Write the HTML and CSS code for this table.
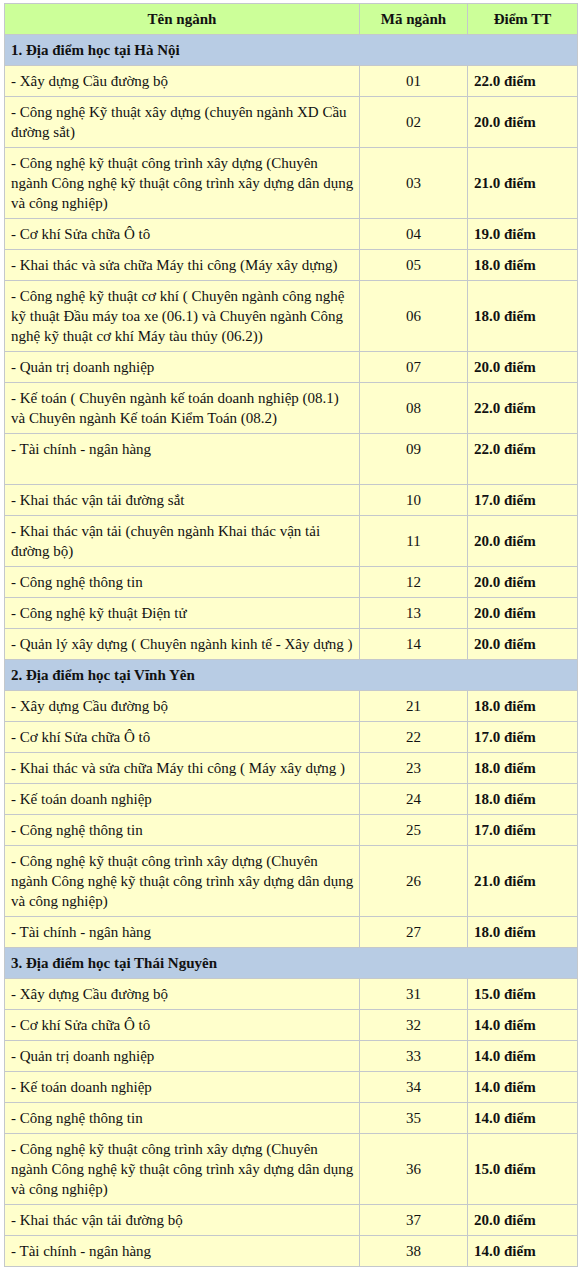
FILE: index.html
```html
<!DOCTYPE html>
<html lang="vi">
<head>
<meta charset="utf-8">
<title>Điểm chuẩn</title>
<link rel="stylesheet" href="styles.css">
</head>
<body>
<div class="wrap">
<table class="scores">
<colgroup><col class="c1"><col class="c2"><col class="c3"></colgroup>
<thead>
<tr class="head"><th>Tên ngành</th><th>Mã ngành</th><th>Điểm TT</th></tr>
</thead>
<tbody>
<tr class="sec"><td colspan="3">1. Địa điểm học tại Hà Nội</td></tr>
<tr><td class="name">- Xây dựng Cầu đường bộ</td><td class="code">01</td><td class="pt">22.0 điểm</td></tr>
<tr><td class="name">- Công nghệ Kỹ thuật xây dựng (chuyên ngành XD Cầu<br>đường sắt)</td><td class="code">02</td><td class="pt">20.0 điểm</td></tr>
<tr><td class="name">- Công nghệ kỹ thuật công trình xây dựng (Chuyên<br>ngành Công nghệ kỹ thuật công trình xây dựng dân dụng<br>và công nghiệp)</td><td class="code">03</td><td class="pt">21.0 điểm</td></tr>
<tr><td class="name">- Cơ khí Sửa chữa Ô tô</td><td class="code">04</td><td class="pt">19.0 điểm</td></tr>
<tr><td class="name">- Khai thác và sửa chữa Máy thi công (Máy xây dựng)</td><td class="code">05</td><td class="pt">18.0 điểm</td></tr>
<tr><td class="name">- Công nghệ kỹ thuật cơ khí ( Chuyên ngành công nghệ<br>kỹ thuật Đầu máy toa xe (06.1) và Chuyên ngành Công<br>nghệ kỹ thuật cơ khí Máy tàu thủy (06.2))</td><td class="code">06</td><td class="pt">18.0 điểm</td></tr>
<tr><td class="name">- Quản trị doanh nghiệp</td><td class="code">07</td><td class="pt">20.0 điểm</td></tr>
<tr><td class="name">- Kế toán ( Chuyên ngành kế toán doanh nghiệp (08.1)<br>và Chuyên ngành Kế toán Kiểm Toán (08.2)</td><td class="code">08</td><td class="pt">22.0 điểm</td></tr>
<tr class="tall"><td class="name">- Tài chính - ngân hàng</td><td class="code">09</td><td class="pt">22.0 điểm</td></tr>
<tr><td class="name">- Khai thác vận tải đường sắt</td><td class="code">10</td><td class="pt">17.0 điểm</td></tr>
<tr><td class="name">- Khai thác vận tải (chuyên ngành Khai thác vận tải<br>đường bộ)</td><td class="code">11</td><td class="pt">20.0 điểm</td></tr>
<tr><td class="name">- Công nghệ thông tin</td><td class="code">12</td><td class="pt">20.0 điểm</td></tr>
<tr><td class="name">- Công nghệ kỹ thuật Điện tử</td><td class="code">13</td><td class="pt">20.0 điểm</td></tr>
<tr><td class="name">- Quản lý xây dựng ( Chuyên ngành kinh tế - Xây dựng )</td><td class="code">14</td><td class="pt">20.0 điểm</td></tr>
<tr class="sec"><td colspan="3">2. Địa điểm học tại Vĩnh Yên</td></tr>
<tr><td class="name">- Xây dựng Cầu đường bộ</td><td class="code">21</td><td class="pt">18.0 điểm</td></tr>
<tr><td class="name">- Cơ khí Sửa chữa Ô tô</td><td class="code">22</td><td class="pt">17.0 điểm</td></tr>
<tr><td class="name">- Khai thác và sửa chữa Máy thi công ( Máy xây dựng )</td><td class="code">23</td><td class="pt">18.0 điểm</td></tr>
<tr><td class="name">- Kế toán doanh nghiệp</td><td class="code">24</td><td class="pt">18.0 điểm</td></tr>
<tr><td class="name">- Công nghệ thông tin</td><td class="code">25</td><td class="pt">17.0 điểm</td></tr>
<tr><td class="name">- Công nghệ kỹ thuật công trình xây dựng (Chuyên<br>ngành Công nghệ kỹ thuật công trình xây dựng dân dụng<br>và công nghiệp)</td><td class="code">26</td><td class="pt">21.0 điểm</td></tr>
<tr><td class="name">- Tài chính - ngân hàng</td><td class="code">27</td><td class="pt">18.0 điểm</td></tr>
<tr class="sec"><td colspan="3">3. Địa điểm học tại Thái Nguyên</td></tr>
<tr><td class="name">- Xây dựng Cầu đường bộ</td><td class="code">31</td><td class="pt">15.0 điểm</td></tr>
<tr><td class="name">- Cơ khí Sửa chữa Ô tô</td><td class="code">32</td><td class="pt">14.0 điểm</td></tr>
<tr><td class="name">- Quản trị doanh nghiệp</td><td class="code">33</td><td class="pt">14.0 điểm</td></tr>
<tr><td class="name">- Kế toán doanh nghiệp</td><td class="code">34</td><td class="pt">14.0 điểm</td></tr>
<tr><td class="name">- Công nghệ thông tin</td><td class="code">35</td><td class="pt">14.0 điểm</td></tr>
<tr><td class="name">- Công nghệ kỹ thuật công trình xây dựng (Chuyên<br>ngành Công nghệ kỹ thuật công trình xây dựng dân dụng<br>và công nghiệp)</td><td class="code">36</td><td class="pt">15.0 điểm</td></tr>
<tr><td class="name">- Khai thác vận tải đường bộ</td><td class="code">37</td><td class="pt">20.0 điểm</td></tr>
<tr><td class="name">- Tài chính - ngân hàng</td><td class="code">38</td><td class="pt">14.0 điểm</td></tr>
</tbody>
</table>
</div>
</body>
</html>
```

FILE: styles.css
```css
html, body {
  margin: 0;
  padding: 0;
  background: #ffffff;
}
.wrap {
  padding: 3px 4px;
}
.scores {
  border-collapse: collapse;
  table-layout: fixed;
  width: 573px;
  font-family: "Liberation Serif", "Times New Roman", serif;
  font-size: 15px;
  line-height: 20px;
  color: #111111;
}
.c1 { width: 355px; }
.c2 { width: 108px; }
.c3 { width: 110px; }
.scores th,
.scores td {
  border: 1px solid #c4c8cc;
  padding: 5px 6px;
  background: #ffffcc;
  vertical-align: middle;
  text-align: left;
}
.head th {
  background: #ccff99;
  text-align: center;
  font-weight: bold;
}
.sec td {
  background: #b8cce4;
  font-weight: bold;
}
.scores td.name {
  white-space: nowrap;
  overflow: hidden;
  padding-right: 1px;
}
.scores td.code {
  text-align: center;
}
.scores td.pt {
  font-weight: bold;
}
.tall td {
  vertical-align: top;
  height: 40px;
}
```
